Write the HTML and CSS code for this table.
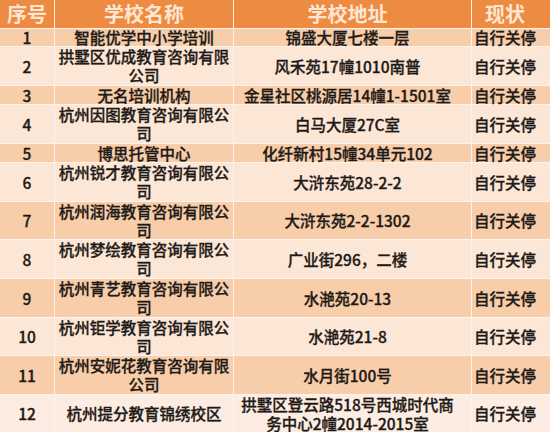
FILE: index.html
```html
<!DOCTYPE html>
<html lang="zh-CN">
<head>
<meta charset="utf-8">
<title>关停学校列表</title>
<link rel="stylesheet" href="styles.css">
</head>
<body>
<div class="table">
  <div class="row head">
    <div class="c1">序号</div><div class="c2">学校名称</div><div class="c3">学校地址</div><div class="c4">现状</div>
  </div>
  <div class="row odd">
    <div class="c1">1</div><div class="c2">智能优学中小学培训</div><div class="c3">锦盛大厦七楼一层</div><div class="c4">自行关停</div>
  </div>
  <div class="row even two">
    <div class="c1">2</div><div class="c2">拱墅区优成教育咨询有限<br>公司</div><div class="c3">风禾苑17幢1010南普</div><div class="c4">自行关停</div>
  </div>
  <div class="row odd">
    <div class="c1">3</div><div class="c2">无名培训机构</div><div class="c3">金星社区桃源居14幢1-1501室</div><div class="c4">自行关停</div>
  </div>
  <div class="row even two">
    <div class="c1">4</div><div class="c2">杭州因图教育咨询有限公<br>司</div><div class="c3">白马大厦27C室</div><div class="c4">自行关停</div>
  </div>
  <div class="row odd">
    <div class="c1">5</div><div class="c2">博思托管中心</div><div class="c3">化纤新村15幢34单元102</div><div class="c4">自行关停</div>
  </div>
  <div class="row even two">
    <div class="c1">6</div><div class="c2">杭州锐才教育咨询有限公<br>司</div><div class="c3">大浒东苑28-2-2</div><div class="c4">自行关停</div>
  </div>
  <div class="row odd two">
    <div class="c1">7</div><div class="c2">杭州润海教育咨询有限公<br>司</div><div class="c3">大浒东苑2-2-1302</div><div class="c4">自行关停</div>
  </div>
  <div class="row even two">
    <div class="c1">8</div><div class="c2">杭州梦绘教育咨询有限公<br>司</div><div class="c3">广业街296，二楼</div><div class="c4">自行关停</div>
  </div>
  <div class="row odd two">
    <div class="c1">9</div><div class="c2">杭州青艺教育咨询有限公<br>司</div><div class="c3">水滟苑20-13</div><div class="c4">自行关停</div>
  </div>
  <div class="row even two">
    <div class="c1">10</div><div class="c2">杭州钜学教育咨询有限公<br>司</div><div class="c3">水滟苑21-8</div><div class="c4">自行关停</div>
  </div>
  <div class="row odd two">
    <div class="c1">11</div><div class="c2">杭州安妮花教育咨询有限<br>公司</div><div class="c3">水月街100号</div><div class="c4">自行关停</div>
  </div>
  <div class="row even last two">
    <div class="c1">12</div><div class="c2">杭州提分教育锦绣校区</div><div class="c3">拱墅区登云路518号西城时代商<br>务中心2幢2014-2015室</div><div class="c4">自行关停</div>
  </div>
</div>
</body>
</html>
```

FILE: styles.css
```css
html, body {
  margin: 0;
  padding: 0;
  background: #ffffff;
}

body {
  width: 550px;
  height: 432px;
  overflow: hidden;
  font-family: "Noto Sans CJK SC", "Noto Sans", sans-serif;
}

.table {
  display: grid;
  grid-template-columns: 54px 178px 237px 1fr;
  grid-template-rows: 28px 17px 38px 18px 38px 18px 38px 37px 38px 38px 37px 38px 37px;
  column-gap: 1px;
  row-gap: 1px;
  background: #fdf3ec;
  width: 550px;
}

.row {
  display: contents;
}

.row > div {
  display: flex;
  align-items: center;
  justify-content: center;
  text-align: center;
  font-size: 15.5px;
  line-height: 17px;
  color: #1e1a17;
  font-weight: 500;
  -webkit-text-stroke: 0.3px #1e1a17;
  white-space: nowrap;
}

.two > div {
  line-height: 19px;
}

.row .c3 {
  padding-right: 10px;
}

.row .c4 {
  padding-right: 12px;
}

.head > div {
  background: #ee8b43;
  color: #fde6d4;
  font-size: 20px;
  font-weight: 700;
  line-height: 28px;
  -webkit-text-stroke: 0;
}

.odd > div {
  background: #f8cda9;
}

.even > div {
  background: #fce6d6;
}

.last > div {
  background: #fdece1;
}
```
